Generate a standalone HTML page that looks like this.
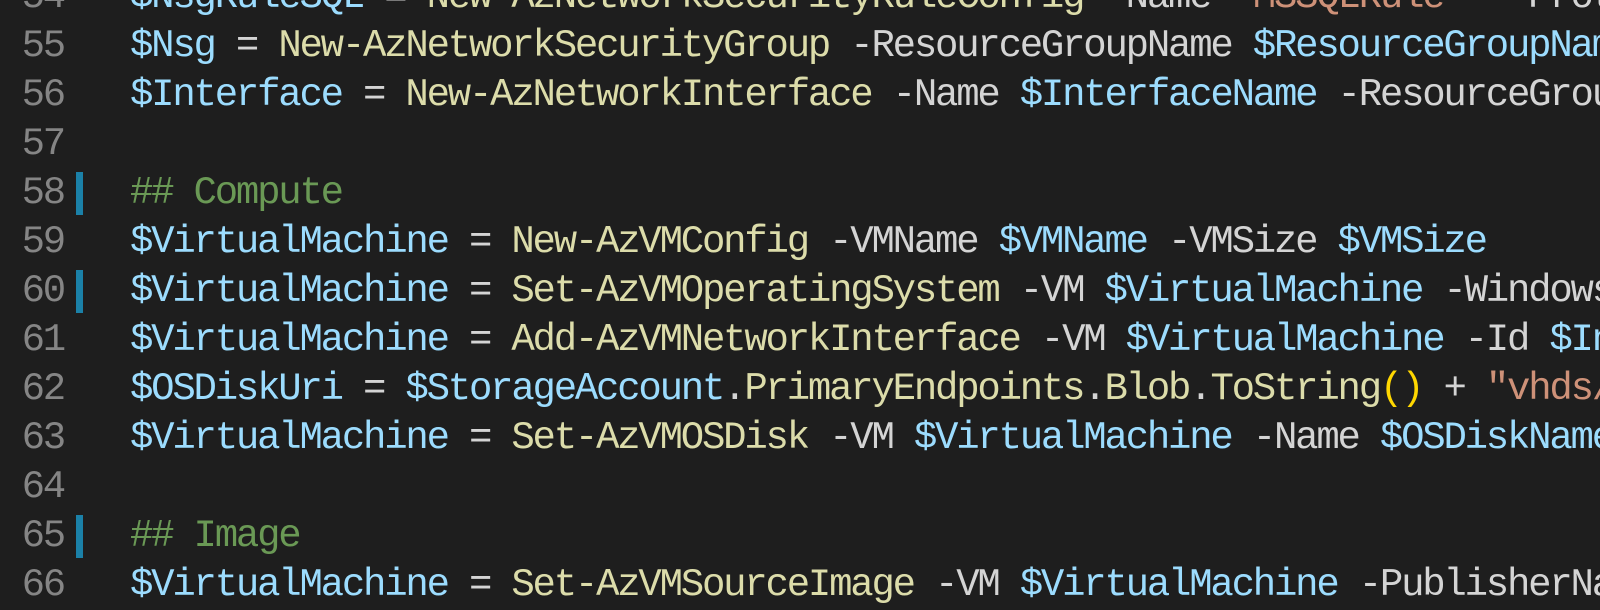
<!DOCTYPE html>
<html><head><meta charset="utf-8"><style>
html,body{margin:0;padding:0;background:#1e1e1e;width:1600px;height:600px;overflow:hidden}
.ed{position:absolute;left:0;top:-27px;width:1600px}
.ln{position:relative;height:49px;line-height:49px;font-family:"Liberation Mono",monospace;font-size:39px;letter-spacing:-2.22px;white-space:pre}
.n{position:absolute;left:0;width:64px;text-align:right;color:#858585}
.g{position:absolute;left:76px;top:3px;width:7px;height:43px;background:#1b81a8}
.c{position:absolute;left:130px;width:1470px;overflow:hidden;color:#d4d4d4}
.v{color:#9cdcfe}.f{color:#dcdcaa}.s{color:#ce9178}.m{color:#6a9955}.p{color:#ffd700}
</style></head><body><div class="ed">
<div class="ln"><span class="n">54</span><span class="c"><span class="v">$NsgRuleSQL</span> = <span class="f">New-AzNetworkSecurityRuleConfig</span> -Name <span class="s">"MSSQLRule"</span>  -Protocol</span></div>
<div class="ln"><span class="n">55</span><span class="c"><span class="v">$Nsg</span> = <span class="f">New-AzNetworkSecurityGroup</span> -ResourceGroupName <span class="v">$ResourceGroupName</span></span></div>
<div class="ln"><span class="n">56</span><span class="c"><span class="v">$Interface</span> = <span class="f">New-AzNetworkInterface</span> -Name <span class="v">$InterfaceName</span> -ResourceGroupName</span></div>
<div class="ln"><span class="n">57</span></div>
<div class="ln"><span class="n">58</span><span class="g"></span><span class="c"><span class="m">## Compute</span></span></div>
<div class="ln"><span class="n">59</span><span class="c"><span class="v">$VirtualMachine</span> = <span class="f">New-AzVMConfig</span> -VMName <span class="v">$VMName</span> -VMSize <span class="v">$VMSize</span></span></div>
<div class="ln"><span class="n">60</span><span class="g"></span><span class="c"><span class="v">$VirtualMachine</span> = <span class="f">Set-AzVMOperatingSystem</span> -VM <span class="v">$VirtualMachine</span> -Windows</span></div>
<div class="ln"><span class="n">61</span><span class="c"><span class="v">$VirtualMachine</span> = <span class="f">Add-AzVMNetworkInterface</span> -VM <span class="v">$VirtualMachine</span> -Id <span class="v">$Interface</span></span></div>
<div class="ln"><span class="n">62</span><span class="c"><span class="v">$OSDiskUri</span> = <span class="v">$StorageAccount</span>.<span class="f">PrimaryEndpoints</span>.<span class="f">Blob</span>.<span class="f">ToString</span><span class="p">()</span> + <span class="s">"vhds/"</span></span></div>
<div class="ln"><span class="n">63</span><span class="c"><span class="v">$VirtualMachine</span> = <span class="f">Set-AzVMOSDisk</span> -VM <span class="v">$VirtualMachine</span> -Name <span class="v">$OSDiskName</span></span></div>
<div class="ln"><span class="n">64</span></div>
<div class="ln"><span class="n">65</span><span class="g"></span><span class="c"><span class="m">## Image</span></span></div>
<div class="ln"><span class="n">66</span><span class="c"><span class="v">$VirtualMachine</span> = <span class="f">Set-AzVMSourceImage</span> -VM <span class="v">$VirtualMachine</span> -PublisherName</span></div>
</div></body></html>
